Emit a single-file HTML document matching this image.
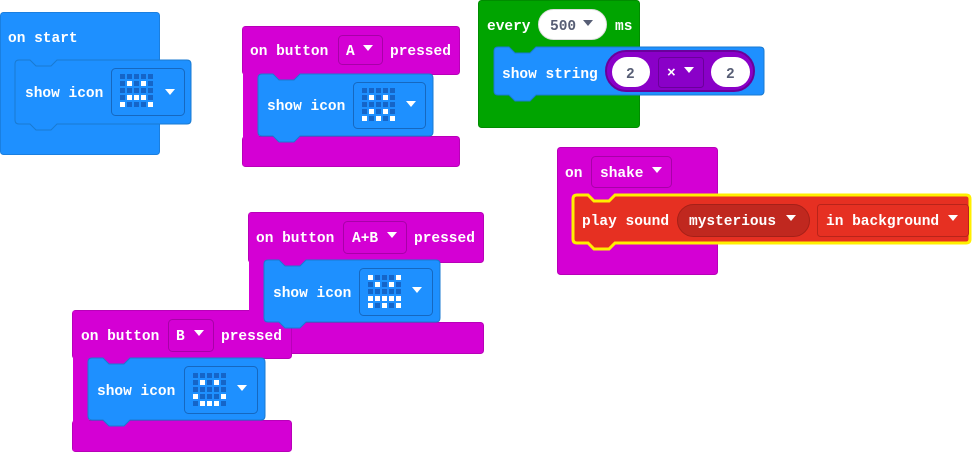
<!DOCTYPE html>
<html><head><meta charset="utf-8"><style>
body{margin:0;background:#fff;width:976px;height:453px;overflow:hidden;position:relative}
svg{position:absolute;left:0;top:0}
text{font-family:"Liberation Mono",monospace;font-weight:bold;font-size:14.5px;fill:#fff}
.g{position:absolute;display:grid;grid-template-columns:repeat(5,5px);grid-gap:2px}
.g i{width:5px;height:5px;background:#1565c8;display:block}
.g i.o{background:#fff}
</style></head><body>
<svg width="976" height="453" viewBox="0 0 976 453">
<g fill="#1e90ff" stroke="#1a7fe0"><rect x="0.5" y="12.5" width="159" height="142" rx="3"/></g>
<g fill="#d400d4" stroke="#b800b8">
<rect x="242.5" y="26.5" width="217" height="48" rx="3"/><rect x="242.5" y="136.5" width="217" height="30" rx="3"/>
<rect x="557.5" y="147.5" width="160" height="127" rx="3"/>
<rect x="248.5" y="212.5" width="235" height="50" rx="3"/><rect x="248.5" y="322.5" width="235" height="31" rx="3"/>
<rect x="72.5" y="310.5" width="219" height="48" rx="3"/><rect x="72.5" y="420.5" width="219" height="31" rx="3"/>
</g>
<g fill="#d400d4">
<rect x="243" y="27" width="16" height="139"/><rect x="249" y="213" width="16" height="140"/><rect x="73" y="311" width="16" height="140"/>
<rect x="272" y="72" width="29" height="9"/><rect x="278" y="258" width="29" height="9"/><rect x="102" y="356" width="29" height="9"/>
</g>
<rect x="478.5" y="0.5" width="161" height="127" rx="3" fill="#00a400" stroke="#008c00"/>
<g fill="#1e90ff" stroke="#1a7ad0">
<path d="M15,64Q15,60 19,60H30l6,6h15l6,-6H187Q191,60 191,64V120Q191,124 187,124H57l-6,6h-15l-6,-6H19Q15,124 15,120Z"/>
<path d="M258,78Q258,74 262,74H273l6,6h15l6,-6H429Q433,74 433,78V132Q433,136 429,136H300l-6,6h-15l-6,-6H262Q258,136 258,132Z"/>
<path d="M494,51Q494,47 498,47H509l6,6h15l6,-6H760Q764,47 764,51V91Q764,95 760,95H536l-6,6h-15l-6,-6H498Q494,95 494,91Z"/>
<path d="M264,264Q264,260 268,260H279l6,6h15l6,-6H436Q440,260 440,264V318Q440,322 436,322H306l-6,6h-15l-6,-6H268Q264,322 264,318Z"/>
<path d="M88,362Q88,358 92,358H103l6,6h15l6,-6H261Q265,358 265,362V416Q265,420 261,420H130l-6,6h-15l-6,-6H92Q88,420 88,416Z"/>
</g>
<path d="M573,199Q573,195 577,195H588l6,6h15l6,-6H966Q970,195 970,199V239Q970,243 966,243H615l-6,6h-15l-6,-6H577Q573,243 573,239Z" fill="#e63022" stroke="#ffef00" stroke-width="3"/>
<g fill="#1e90ff" stroke="#1668c0">
<rect x="111.5" y="68.5" width="73" height="47" rx="4"/>
<rect x="353.5" y="82.5" width="72" height="46" rx="4"/>
<rect x="359.5" y="268.5" width="73" height="47" rx="4"/>
<rect x="184.5" y="366.5" width="73" height="47" rx="4"/>
</g>
<g fill="#d400d4" stroke="#a800a8">
<rect x="338.5" y="35.5" width="44" height="29" rx="4"/>
<rect x="591.5" y="156.5" width="80" height="31" rx="4"/>
<rect x="343.5" y="221.5" width="63" height="32" rx="4"/>
<rect x="168.5" y="319.5" width="45" height="32" rx="4"/>
</g>
<rect x="538.5" y="9.5" width="68" height="30" rx="15" fill="#fff" stroke="#ddd"/>
<rect x="606" y="51" width="148" height="40" rx="20" fill="#8a00c8" stroke="#6a009a" stroke-width="2"/>
<rect x="612" y="57" width="38" height="30" rx="15" fill="#fff"/>
<rect x="658.5" y="57.5" width="45" height="30" rx="3" fill="#8a00c8" stroke="#6a009a"/>
<rect x="711" y="57" width="39" height="30" rx="15" fill="#fff"/>
<rect x="677.5" y="204.5" width="132" height="32" rx="16" fill="#c0281f" stroke="#a52018"/>
<rect x="817.5" y="204.5" width="151" height="32" rx="3" fill="#e63022" stroke="#b8241a"/>
<text x="8" y="42">on start</text>
<text x="25" y="97">show icon</text>
<text x="250" y="55">on button</text><text x="346" y="55">A</text><text x="390" y="55">pressed</text>
<text x="267" y="110">show icon</text>
<text x="487" y="30">every</text><text x="550" y="30" style="fill:#575e75">500</text><text x="615" y="30">ms</text>
<text x="502" y="78">show string</text>
<text x="626" y="78" style="fill:#575e75">2</text><text x="667" y="77">×</text><text x="726" y="78" style="fill:#575e75">2</text>
<text x="565" y="177">on</text><text x="600" y="177">shake</text>
<text x="582" y="225">play sound</text><text x="689" y="225">mysterious</text><text x="826" y="225">in background</text>
<text x="256" y="242">on button</text><text x="352" y="242">A+B</text><text x="414" y="242">pressed</text>
<text x="273" y="297">show icon</text>
<text x="81" y="340">on button</text><text x="176" y="340">B</text><text x="221" y="340">pressed</text>
<text x="97" y="395">show icon</text>
<g fill="#fff">
<polygon points="165,89 175,89 170,95"/>
<polygon points="406,101 416,101 411,107"/>
<polygon points="412,287 422,287 417,293"/>
<polygon points="237,385 247,385 242,391"/>
<polygon points="363,45 373,45 368,51"/>
<polygon points="387,232 397,232 392,238"/>
<polygon points="194,330 204,330 199,336"/>
<polygon points="652,167 662,167 657,173"/>
<polygon points="684,67 694,67 689,73"/>
<polygon points="786,215 796,215 791,221"/>
<polygon points="948,215 958,215 953,221"/>
</g>
<polygon points="583,20 593,20 588,26" fill="#575e75"/>
</svg>
<div class="g" style="left:120px;top:74px"><i></i><i></i><i></i><i></i><i></i><i></i><i class="o"></i><i></i><i class="o"></i><i></i><i></i><i></i><i></i><i></i><i></i><i></i><i class="o"></i><i class="o"></i><i class="o"></i><i></i><i class="o"></i><i></i><i></i><i></i><i class="o"></i></div>
<div class="g" style="left:362px;top:88px"><i></i><i></i><i></i><i></i><i></i><i></i><i class="o"></i><i></i><i class="o"></i><i></i><i></i><i></i><i></i><i></i><i></i><i></i><i class="o"></i><i></i><i class="o"></i><i></i><i class="o"></i><i></i><i class="o"></i><i></i><i class="o"></i></div>
<div class="g" style="left:368px;top:275px"><i class="o"></i><i></i><i></i><i></i><i class="o"></i><i></i><i class="o"></i><i></i><i class="o"></i><i></i><i></i><i></i><i></i><i></i><i></i><i class="o"></i><i class="o"></i><i class="o"></i><i class="o"></i><i class="o"></i><i class="o"></i><i></i><i class="o"></i><i></i><i class="o"></i></div>
<div class="g" style="left:193px;top:373px"><i></i><i></i><i></i><i></i><i></i><i></i><i class="o"></i><i></i><i class="o"></i><i></i><i></i><i></i><i></i><i></i><i></i><i class="o"></i><i></i><i></i><i></i><i class="o"></i><i></i><i class="o"></i><i class="o"></i><i class="o"></i><i></i></div>
</body></html>
